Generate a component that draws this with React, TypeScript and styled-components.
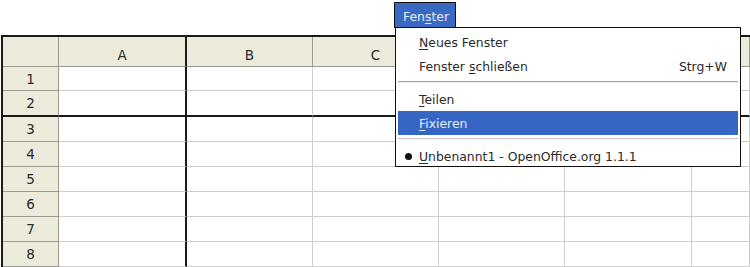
import React from "react";
import styled, { createGlobalStyle } from "styled-components";

const Global = createGlobalStyle`
  html, body { margin: 0; padding: 0; background: #fff; }
  body { font-family: "DejaVu Sans", Verdana, sans-serif; }
`;

const Page = styled.div`
  position: relative;
  width: 750px;
  height: 267px;
  overflow: hidden;
  background: #fff;
`;

const MenuBar = styled.div`
  height: 35px;
  display: flex;
  align-items: flex-start;
  padding-top: 2px;
  box-sizing: border-box;
`;

const MenuTitle = styled.div`
  margin-left: 394px;
  width: 62px;
  height: 26px;
  box-sizing: border-box;
  border: 1px solid #111;
  border-bottom: none;
  background: #3a69c4;
  color: #e6edf9;
  font-size: 12.4px;
  display: flex;
  align-items: center;
  padding-left: 8px;
  padding-top: 1px;
`;

const Sheet = styled.div`
  margin-left: 1px;
  border-top: 2px solid #1a1a1a;
  border-left: 2px solid #1a1a1a;
  display: grid;
  grid-template-columns: 56px 128px 126px 126px 126px 127px 1fr;
  grid-template-rows: 30px 24px 26px repeat(6, 25px);
`;

const HeadCell = styled.div<{ $thickRight?: boolean; $thickBottom?: boolean; $col?: boolean }>`
  box-sizing: border-box;
  background: #eceadb;
  border-right: ${(p) => (p.$thickRight ? "2px solid #1a1a1a" : "1px solid #9a9a90")};
  border-bottom: ${(p) => (p.$thickBottom ? "2px solid #1a1a1a" : "1px solid #9a9a90")};
  color: #2a2a2a;
  font-size: 13.5px;
  display: flex;
  justify-content: center;
  align-items: ${(p) => (p.$col ? "flex-end" : "center")};
  padding-bottom: ${(p) => (p.$col ? "3px" : "0")};
`;

const Cell = styled.div<{ $thickRight?: boolean; $thickBottom?: boolean }>`
  box-sizing: border-box;
  background: #fff;
  border-right: ${(p) => (p.$thickRight ? "2px solid #1a1a1a" : "1px solid #cfcfcf")};
  border-bottom: ${(p) => (p.$thickBottom ? "2px solid #1a1a1a" : "1px solid #cfcfcf")};
`;

const Dropdown = styled.div`
  position: absolute;
  left: 395px;
  top: 27px;
  width: 346px;
  height: 140px;
  box-sizing: border-box;
  border: 1px solid #111;
  background: #fff;
  padding: 2px 2px 0 2px;
  display: flex;
  flex-direction: column;
  font-size: 12.4px;
  color: #2a2a2a;
`;

const Item = styled.div<{ $active?: boolean }>`
  height: 24px;
  flex: none;
  display: flex;
  align-items: center;
  padding: 0 11px 0 21px;
  position: relative;
  background: ${(p) => (p.$active ? "#3566c3" : "transparent")};
  color: ${(p) => (p.$active ? "#e4ebf8" : "#2a2a2a")};
`;

const Label = styled.span`
  flex: 1;
`;

const Shortcut = styled.span`
  color: #2a2a2a;
`;

const Separator = styled.div<{ $dark?: boolean }>`
  flex: none;
  height: 9px;
  display: flex;
  align-items: flex-start;
  padding-top: 3px;
  box-sizing: border-box;
  &::before {
    content: "";
    display: block;
    width: 100%;
    height: 1px;
    background: ${(p) => (p.$dark ? "#9c9c9c" : "#c8c8c8")};
    box-shadow: 0 1px 0 #f2f2f2;
  }
`;

const Bullet = styled.span`
  position: absolute;
  left: 7px;
  top: 50%;
  width: 7px;
  height: 7px;
  margin-top: -3px;
  border-radius: 50%;
  background: #111;
`;

const U = styled.span`
  text-decoration: underline;
  text-underline-offset: 2px;
`;

const cols = ["A", "B", "C", "", "", ""];

export default function App() {
  const rows = [1, 2, 3, 4, 5, 6, 7, 8];
  return (
    <Page>
      <Global />
      <MenuBar>
        <MenuTitle>
          Fen<U>s</U>ter
        </MenuTitle>
      </MenuBar>
      <Sheet>
        <HeadCell />
        {cols.map((c, i) => (
          <HeadCell key={i} $col $thickRight={i === 0}>
            {c}
          </HeadCell>
        ))}
        {rows.map((r) => (
          <React.Fragment key={r}>
            <HeadCell $thickBottom={r === 2}>{r}</HeadCell>
            {[0, 1, 2, 3, 4, 5].map((c) => (
              <Cell key={c} $thickRight={c === 0} $thickBottom={r === 2} />
            ))}
          </React.Fragment>
        ))}
      </Sheet>
      <Dropdown>
        <Item>
          <Label>
            <U>N</U>eues Fenster
          </Label>
        </Item>
        <Item>
          <Label>
            Fenster <U>s</U>chließen
          </Label>
          <Shortcut>Strg+W</Shortcut>
        </Item>
        <Separator $dark />
        <Item>
          <Label>
            <U>T</U>eilen
          </Label>
        </Item>
        <Item $active>
          <Label>
            <U>F</U>ixieren
          </Label>
        </Item>
        <Separator />
        <Item>
          <Bullet />
          <Label>
            <U>U</U>nbenannt1 - OpenOffice.org 1.1.1
          </Label>
        </Item>
      </Dropdown>
    </Page>
  );
}
